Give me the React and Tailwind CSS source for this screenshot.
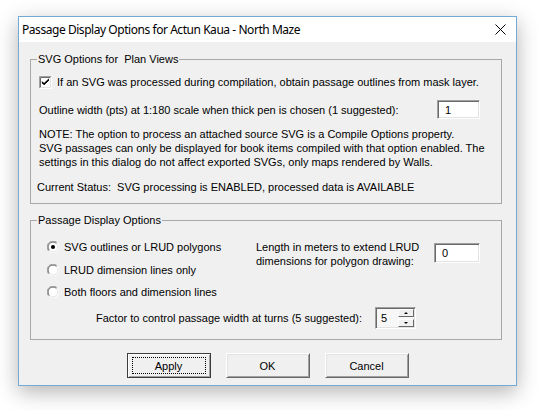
const sunken =
  'border border-t-[#a0a0a0] border-l-[#a0a0a0] border-r-white border-b-white shadow-[inset_1px_1px_0_#696969,inset_-1px_-1px_0_#e3e3e3]'

function CheckBox() {
  return (
    <svg width="13" height="13" viewBox="0 0 13 13" className="shrink-0">
      <rect x="0" y="0" width="13" height="13" fill="#ffffff" />
      <path d="M0.5 12.5 V0.5 H12.5" stroke="#a0a0a0" fill="none" />
      <path d="M1.5 11.5 V1.5 H11.5" stroke="#696969" fill="none" />
      <path d="M0.5 12.5 H12.5 V0.5" stroke="#ffffff" fill="none" />
      <path d="M1.5 11.5 H11.5 V1.5" stroke="#e3e3e3" fill="none" />
      <path d="M3 5.5 L5 7.5 L10 2.8 M3 6.8 L5 8.8 L10 4.1 M3 6 L5 8 L10 3.5" stroke="#000" fill="none" strokeWidth="1" />
    </svg>
  )
}

function Radio({ checked }) {
  return (
    <svg width="12" height="12" viewBox="0 0 12 12" className="shrink-0">
      <circle cx="6" cy="6" r="5.5" fill="#ffffff" />
      <path d="M1.8 10.2 A5.5 5.5 0 0 1 10.2 1.8" stroke="#a0a0a0" fill="none" />
      <path d="M1.8 10.2 A5.5 5.5 0 0 0 10.2 1.8" stroke="#ffffff" fill="none" />
      <path d="M2.5 9.5 A4.5 4.5 0 0 1 9.5 2.5" stroke="#696969" fill="none" />
      <path d="M2.5 9.5 A4.5 4.5 0 0 0 9.5 2.5" stroke="#e3e3e3" fill="none" />
      {checked ? <circle cx="6" cy="6" r="2" fill="#000" /> : null}
    </svg>
  )
}

function Group({ title, className, children }) {
  return (
    <fieldset className={`w-[472px] border border-[#a8a8a8] p-0 m-0 ${className}`}>
      <legend className="whitespace-pre px-[1px] ml-[6px] leading-[14px]">{title}</legend>
      {children}
    </fieldset>
  )
}

function Button({ label, isDefault }) {
  return (
    <button
      type="button"
      className={`w-[84px] h-[25px] bg-[#f0f0f0] flex items-center justify-center ${
        isDefault
          ? 'border border-[#3c3c3c] shadow-[inset_1px_1px_0_#ffffff,inset_-1px_-1px_0_#a0a0a0]'
          : 'border border-t-white border-l-white border-r-[#696969] border-b-[#696969] shadow-[inset_1px_1px_0_#e3e3e3,inset_-1px_-1px_0_#a0a0a0]'
      }`}
    >
      {isDefault ? (
        <span className="w-[74px] h-[17px] border border-dotted border-black flex items-center justify-center">{label}</span>
      ) : (
        label
      )}
    </button>
  )
}

export default function App() {
  return (
    <div className="w-[539px] h-[410px] bg-white overflow-hidden pt-[16px] pl-[18px] font-['Liberation_Sans',Arial,sans-serif] text-[11px] leading-[14px] text-black">
      <div className="w-[499px] h-[370px] border border-[#74abd6] bg-[#f0f0f0] shadow-[0_6px_20px_rgba(0,0,0,0.3)] flex flex-col">
        <div className="h-[25px] shrink-0 bg-white flex items-center justify-between pl-[3px] pr-[10px] font-['Noto_Sans',sans-serif] text-[12px] tracking-[-0.45px]">
          <span>Passage Display Options for Actun Kaua - North Maze</span>
          <svg width="11" height="11" viewBox="0 0 11 11">
            <path d="M0.5 0.5 L10.5 10.5 M10.5 0.5 L0.5 10.5" stroke="#000" strokeWidth="1" />
          </svg>
        </div>

        <div className="pl-[11px] flex flex-col">
          <Group title="SVG Options for  Plan Views" className="mt-[10px] pb-[9px]">
            <div className="mt-[9px] ml-[8px] flex items-center gap-[5px]">
              <CheckBox />
              <span>If an SVG was processed during compilation, obtain passage outlines from mask layer.</span>
            </div>
            <div className="mt-[11px] ml-[8px] flex items-center">
              <span>Outline width (pts) at 1:180 scale when thick pen is chosen (1 suggested):</span>
              <div className={`ml-auto mr-[21px] w-[43px] h-[19px] bg-white pl-[7px] flex items-center ${sunken}`}>1</div>
            </div>
            <p className="mt-[8px] ml-[8px]">
              NOTE: The option to process an attached source SVG is a Compile Options property.
              <br />
              SVG passages can only be displayed for book items compiled with that option enabled. The
              <br />
              settings in this dialog do not affect exported SVGs, only maps rendered by Walls.
            </p>
            <p className="mt-[11px] ml-[6px] whitespace-pre">
              Current Status:  SVG processing is ENABLED, processed data is AVAILABLE
            </p>
          </Group>

          <Group title="Passage Display Options" className="mt-[9px] pb-[10px]">
            <div className="mt-[13px] flex">
              <div className="w-[225px] pl-[16px] flex flex-col">
                <label className="flex items-center gap-[5px] h-[14px]">
                  <Radio checked />
                  <span>SVG outlines or LRUD polygons</span>
                </label>
                <label className="flex items-center gap-[5px] h-[14px] mt-[9px]">
                  <Radio />
                  <span>LRUD dimension lines only</span>
                </label>
                <label className="flex items-center gap-[5px] h-[14px] mt-[8px]">
                  <Radio />
                  <span>Both floors and dimension lines</span>
                </label>
              </div>
              <div className="flex-1 flex items-start">
                <p>
                  Length in meters to extend LRUD
                  <br />
                  dimensions for polygon drawing:
                </p>
                <div className={`ml-auto mr-[21px] mt-[3px] w-[46px] h-[20px] bg-white pl-[7px] flex items-center ${sunken}`}>0</div>
              </div>
            </div>
            <div className="mt-[8px] pl-[65px] flex items-center gap-[13px]">
              <span>Factor to control passage width at turns (5 suggested):</span>
              <div className={`w-[41px] h-[22px] bg-[#f7f7f7] flex items-center justify-between pl-[5px] pr-[1px] ${sunken}`}>
                <span>5</span>
                <div className="flex flex-col gap-[2px]">
                  {['M2 4 L4 2 L6 4 Z', 'M2 2 L4 4 L6 2 Z'].map((d) => (
                    <div
                      key={d}
                      className="w-[16px] h-[8px] bg-[#f0f0f0] border border-t-white border-l-white border-r-[#696969] border-b-[#696969] flex items-center justify-center"
                    >
                      <svg width="8" height="6" viewBox="0 0 8 6">
                        <path d={d} fill="#000" />
                      </svg>
                    </div>
                  ))}
                </div>
              </div>
            </div>
          </Group>
        </div>

        <div className="mt-[13px] flex justify-center gap-[15px]">
          <Button label="Apply" isDefault />
          <Button label="OK" />
          <Button label="Cancel" />
        </div>
      </div>
    </div>
  )
}
